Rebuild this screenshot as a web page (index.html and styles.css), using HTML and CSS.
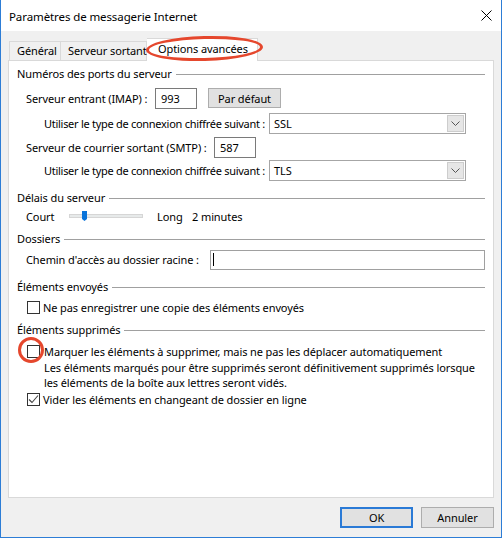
FILE: index.html
```html
<!DOCTYPE html>
<html lang="fr">

<head>
  <meta charset="UTF-8">
  <title>Paramètres de messagerie Internet</title>
  <link rel="stylesheet" href="styles.css">
</head>

<body>
  <div class="window">
    <div class="titlebar">
      <span class="title">Paramètres de messagerie Internet</span>
      <svg class="close" width="11" height="11" viewBox="0 0 11 11">
        <path d="M0.5 0.5 L10.5 10.5 M10.5 0.5 L0.5 10.5" stroke="#000" stroke-width="1" fill="none" />
      </svg>
    </div>

    <div class="content">
      <div class="tabs">
        <div class="tab tab-general">Général</div>
        <div class="tab tab-smtp">Serveur sortant</div>
        <div class="tab tab-active">Options avancées</div>
      </div>

      <div class="panel">
        <div class="group-title head-ports">Numéros des ports du serveur</div>

        <div class="row row-imap">
          <span class="label label-imap">Serveur entrant (IMAP) :</span>
          <div class="textbox port">993</div>
          <div class="btn btn-default">Par défaut</div>
        </div>
        <div class="row row-enc1">
          <span class="label label-enc">Utiliser le type de connexion chiffrée suivant :</span>
          <div class="combo">
            <span>SSL</span>
            <span class="combo-arrow">
              <svg width="9" height="5" viewBox="0 0 9 5">
                <path d="M0.5 0.5 L4.5 4.5 L8.5 0.5" stroke="#555" fill="none" />
              </svg>
            </span>
          </div>
        </div>
        <div class="row row-smtp">
          <span class="label label-smtp">Serveur de courrier sortant (SMTP) :</span>
          <div class="textbox port">587</div>
        </div>
        <div class="row row-enc2">
          <span class="label label-enc">Utiliser le type de connexion chiffrée suivant :</span>
          <div class="combo">
            <span>TLS</span>
            <span class="combo-arrow">
              <svg width="9" height="5" viewBox="0 0 9 5">
                <path d="M0.5 0.5 L4.5 4.5 L8.5 0.5" stroke="#555" fill="none" />
              </svg>
            </span>
          </div>
        </div>

        <div class="group-title head-delay">Délais du serveur</div>
        <div class="row row-delay">
          <span class="label label-court">Court</span>
          <div class="slider">
            <div class="track"></div>
            <svg class="thumb" width="5" height="10" viewBox="0 0 5 10">
              <path d="M0 0 H5 V8 L2.5 10 L0 8 Z" fill="#0a74da" />
            </svg>
          </div>
          <span class="label label-long">Long</span>
          <span class="label">2 minutes</span>
        </div>

        <div class="group-title head-folders">Dossiers</div>
        <div class="row row-root">
          <span class="label label-root">Chemin d'accès au dossier racine :</span>
          <div class="textbox wide"><span class="caret"></span></div>
        </div>

        <div class="group-title head-sent">Éléments envoyés</div>
        <div class="row row-check row-sent">
          <span class="check"></span>
          <span>Ne pas enregistrer une copie des éléments envoyés</span>
        </div>

        <div class="group-title head-deleted">Éléments supprimés</div>
        <div class="row row-check row-mark">
          <span class="check"></span>
          <span class="mark-text">Marquer les éléments à supprimer, mais ne pas les déplacer automatiquement</span>
        </div>
        <p class="note">Les éléments marqués pour être supprimés seront définitivement supprimés lorsque<br>les éléments de la boîte aux lettres seront vidés.</p>
        <div class="row row-check row-purge">
          <span class="check">
            <svg width="11" height="11" viewBox="0 0 11 11">
              <path d="M1 5.5 L4 8.5 L10 1.5" stroke="#444" stroke-width="1.1" fill="none" />
            </svg>
          </span>
          <span>Vider les éléments en changeant de dossier en ligne</span>
        </div>
      </div>

      <div class="footer">
        <div class="btn btn-ok">OK</div>
        <div class="btn">Annuler</div>
      </div>
    </div>

    <!-- red highlight marks -->
    <div class="mark-tab"></div>
    <div class="mark-box"></div>
  </div>
</body>

</html>
```

FILE: styles.css
```css
body {
  margin: 0;
  padding: 0;
  font-family: "Noto Sans", "Segoe UI", Arial, sans-serif;
  font-size: 11px;
  letter-spacing: -0.1px;
  color: #000;
  background: #fff;
}

.window {
  position: relative;
  width: 502px;
  height: 538px;
  box-sizing: border-box;
  border: 1px solid #2d7dd6;
  border-top: none;
  display: flex;
  flex-direction: column;
}

.titlebar {
  height: 31px;
  background: #fff;
  display: flex;
  align-items: center;
  justify-content: space-between;
  padding: 0 9px 0 8px;
}

.title {
  font-size: 11.5px;
  margin-top: 1px;
}

.content {
  flex: 1;
  background: #f0f0f0;
  padding: 7px 7px 0 7px;
  display: flex;
  flex-direction: column;
}

/* tab strip */
.tabs {
  display: flex;
  height: 22px;
  padding-left: 1px;
  align-items: flex-end;
  position: relative;
  z-index: 1;
}

.tab {
  box-sizing: border-box;
  height: 19px;
  border: 1px solid #d9d9d9;
  border-bottom: none;
  padding: 1px 0 0 7px;
  background: #f0f0f0;
  line-height: 16px;
  white-space: nowrap;
}

.tab-general {
  width: 52px;
}

.tab-smtp {
  width: 86px;
  border-left: none;
}

.tab-active {
  width: 111px;
  height: 23px;
  margin-bottom: -1px;
  background: #fff;
  border-left: none;
  padding-left: 11px;
  padding-top: 2px;
}

.panel {
  background: #fff;
  border: 1px solid #d9d9d9;
  height: 438px;
  box-sizing: border-box;
  padding: 0 8px;
  display: flex;
  flex-direction: column;
}

.group-title {
  height: 16px;
  display: flex;
  align-items: center;
  gap: 4px;
  white-space: nowrap;
}

.group-title::after {
  content: "";
  flex: 1;
  border-top: 1px solid #a0a0a0;
  margin-top: 2px;
}

.head-ports { margin-top: 4px; }
.head-delay { margin-top: 8px; }
.head-folders { margin-top: 6px; }
.head-sent { margin-top: 8px; }
.head-deleted { margin-top: 6px; }

.row {
  display: flex;
  align-items: center;
  height: 21px;
  padding-left: 9px;
  white-space: nowrap;
}

.row-imap { margin-top: 7px; }
.row-enc1 { margin-top: 4px; }
.row-smtp { margin-top: 3px; }
.row-enc2 { margin-top: 2px; }
.row-delay { margin-top: 3px; height: 16px; }
.row-root { margin-top: 3px; }

.label-imap { width: 129px; }
.label-smtp { width: 188px; }
.label-root { width: 184px; }
.label-court { width: 43px; }
.label-long { width: 35px; }

.label-enc {
  width: 243px;
  padding-left: 18px;
  box-sizing: border-box;
  letter-spacing: -0.28px;
}

.textbox {
  box-sizing: border-box;
  height: 21px;
  border: 1px solid #7a7a7a;
  background: #fff;
  padding: 0 5px;
  line-height: 19px;
}

.port {
  width: 42px;
}

.wide {
  width: 275px;
  border-color: #a0a0a0;
  height: 20px;
  display: flex;
  align-items: center;
  padding-left: 2px;
}

.caret {
  width: 1px;
  height: 13px;
  background: #000;
}

.btn {
  box-sizing: border-box;
  width: 73px;
  height: 21px;
  background: #e1e1e1;
  border: 1px solid #adadad;
  display: flex;
  align-items: center;
  justify-content: center;
}

.btn-default {
  margin-left: 11px;
  height: 20px;
  align-self: flex-start;
}

.combo {
  box-sizing: border-box;
  width: 197px;
  height: 21px;
  border: 1px solid #a6a6a6;
  background: #fff;
  display: flex;
  align-items: center;
  justify-content: space-between;
  padding: 0 1px 0 4px;
}

.combo-arrow {
  box-sizing: border-box;
  width: 17px;
  height: 17px;
  background: #e6e6e6;
  border: 1px solid #cdcdcd;
  display: flex;
  align-items: center;
  justify-content: center;
}

/* timeout slider */
.slider {
  position: relative;
  width: 74px;
  height: 16px;
  margin-right: 14px;
  display: flex;
  align-items: center;
}

.track {
  width: 100%;
  height: 4px;
  box-sizing: border-box;
  background: #e7eaea;
  border: 1px solid #d6d6d6;
}

.thumb {
  position: absolute;
  left: 13px;
  top: 3px;
}

/* check boxes */
.row-check {
  height: 16px;
  padding-left: 10px;
}

.row-sent { margin-top: 5px; }
.row-mark { margin-top: 6px; }
.row-purge { margin-top: 1px; }

.check {
  box-sizing: border-box;
  width: 13px;
  height: 13px;
  border: 1px solid #333;
  background: #fff;
  margin-right: 3px;
  display: flex;
  align-items: center;
  justify-content: center;
}

.mark-text {
  margin-left: 1px;
}

.note {
  margin: 1px 0 0 27px;
  line-height: 15px;
}

.footer {
  display: flex;
  justify-content: flex-end;
  gap: 8px;
  margin-top: 9px;
}

.btn-ok {
  border: 2px solid #2a7ad6;
}

/* red highlight marks */
.mark-tab {
  position: absolute;
  left: 145px;
  top: 36px;
  width: 111px;
  height: 19px;
  border: 3px solid #e5472d;
  border-radius: 50%;
  transform: rotate(-1.5deg);
  z-index: 2;
}

.mark-box {
  position: absolute;
  left: 17px;
  top: 337px;
  width: 20px;
  height: 20px;
  border: 3px solid #e5472d;
  border-radius: 50%;
  z-index: 2;
}
```
